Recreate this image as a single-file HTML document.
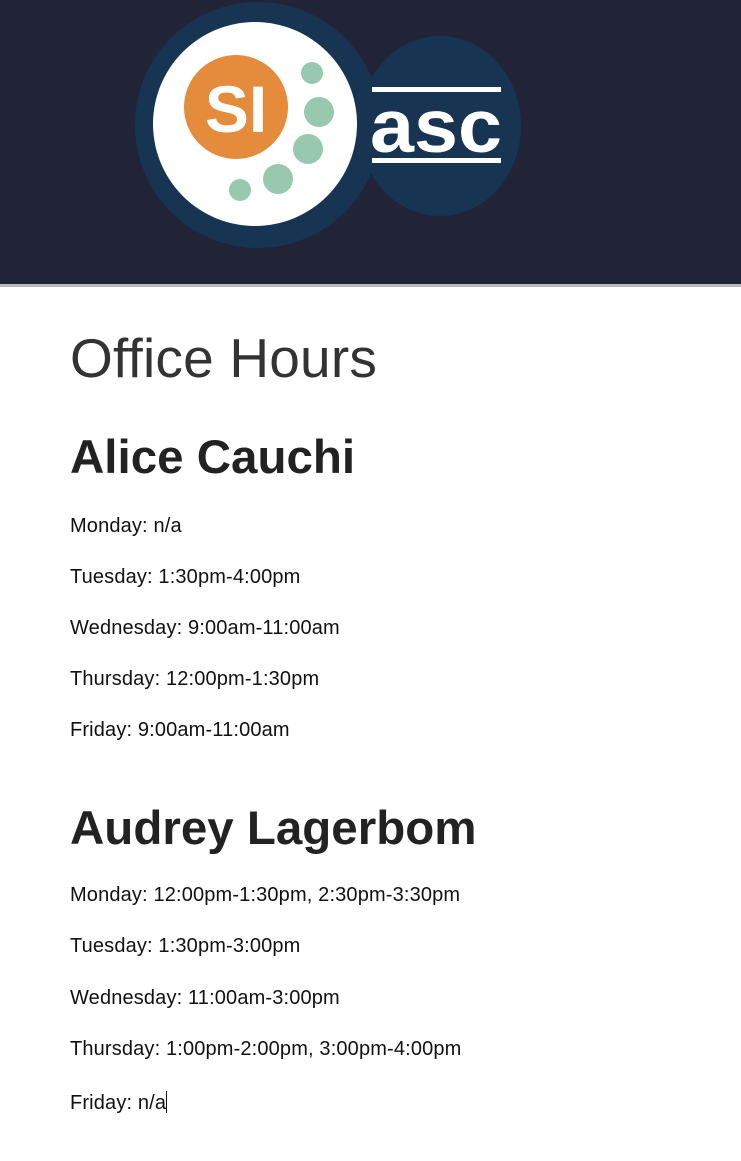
<!DOCTYPE html>
<html><head><meta charset="utf-8"><style>
html,body{margin:0;padding:0;width:741px;height:1161px;background:#fff;overflow:hidden;font-family:"Liberation Sans",sans-serif;color:#222}
.hdr{position:absolute;left:0;top:0;width:741px;height:284px;background:#212437;border-bottom:3px solid #b8b8bc}
.t{position:absolute;left:70px;white-space:nowrap;line-height:1}
.h1{font-size:55px;color:#333;font-weight:normal;letter-spacing:0.2px}
.h2{font-size:47.5px;font-weight:bold;color:#222}
.p{font-size:20px;color:#111;letter-spacing:0.15px}
</style></head><body>
<div class="hdr">
<svg width="741" height="284" viewBox="0 0 741 284">
<ellipse cx="440" cy="126" rx="81" ry="90" fill="#173452"/>
<circle cx="258" cy="125" r="123" fill="#173452"/>
<circle cx="255" cy="124" r="102" fill="#fff"/>
<circle cx="236" cy="107" r="52" fill="#e48b3c"/>
<text x="236" y="132" text-anchor="middle" font-family="Liberation Sans" font-weight="bold" font-size="66" fill="#fff">SI</text>
<circle cx="312" cy="73" r="11" fill="#98c9b0"/>
<circle cx="319" cy="112" r="15" fill="#98c9b0"/>
<circle cx="308" cy="149" r="15" fill="#98c9b0"/>
<circle cx="278" cy="179" r="15" fill="#98c9b0"/>
<circle cx="240" cy="190" r="11" fill="#98c9b0"/>
<rect x="372" y="87" width="129" height="5" fill="#fff"/>
<rect x="372" y="158" width="129" height="5" fill="#fff"/>
<g transform="translate(436,152) scale(1,1.35)">
<text x="0" y="0" text-anchor="middle" font-family="Liberation Sans" font-weight="bold" font-size="56" fill="#fff" textLength="132" lengthAdjust="spacingAndGlyphs">asc</text>
</g>
</svg>
</div>
<div class="t h1" style="top:331px">Office Hours</div>
<div class="t h2" style="top:434px">Alice Cauchi</div>
<div class="t p" style="top:516px">Monday: n/a</div>
<div class="t p" style="top:567px">Tuesday: 1:30pm-4:00pm</div>
<div class="t p" style="top:618px">Wednesday: 9:00am-11:00am</div>
<div class="t p" style="top:669px">Thursday: 12:00pm-1:30pm</div>
<div class="t p" style="top:720px">Friday: 9:00am-11:00am</div>
<div class="t h2" style="top:805px">Audrey Lagerbom</div>
<div class="t p" style="top:885px">Monday: 12:00pm-1:30pm, 2:30pm-3:30pm</div>
<div class="t p" style="top:936px">Tuesday: 1:30pm-3:00pm</div>
<div class="t p" style="top:988px">Wednesday: 11:00am-3:00pm</div>
<div class="t p" style="top:1039px">Thursday: 1:00pm-2:00pm, 3:00pm-4:00pm</div>
<div class="t p" style="top:1091px">Friday: n/a<span style="display:inline-block;width:1px;height:22px;background:#111;vertical-align:-4px"></span></div>
</body></html>
